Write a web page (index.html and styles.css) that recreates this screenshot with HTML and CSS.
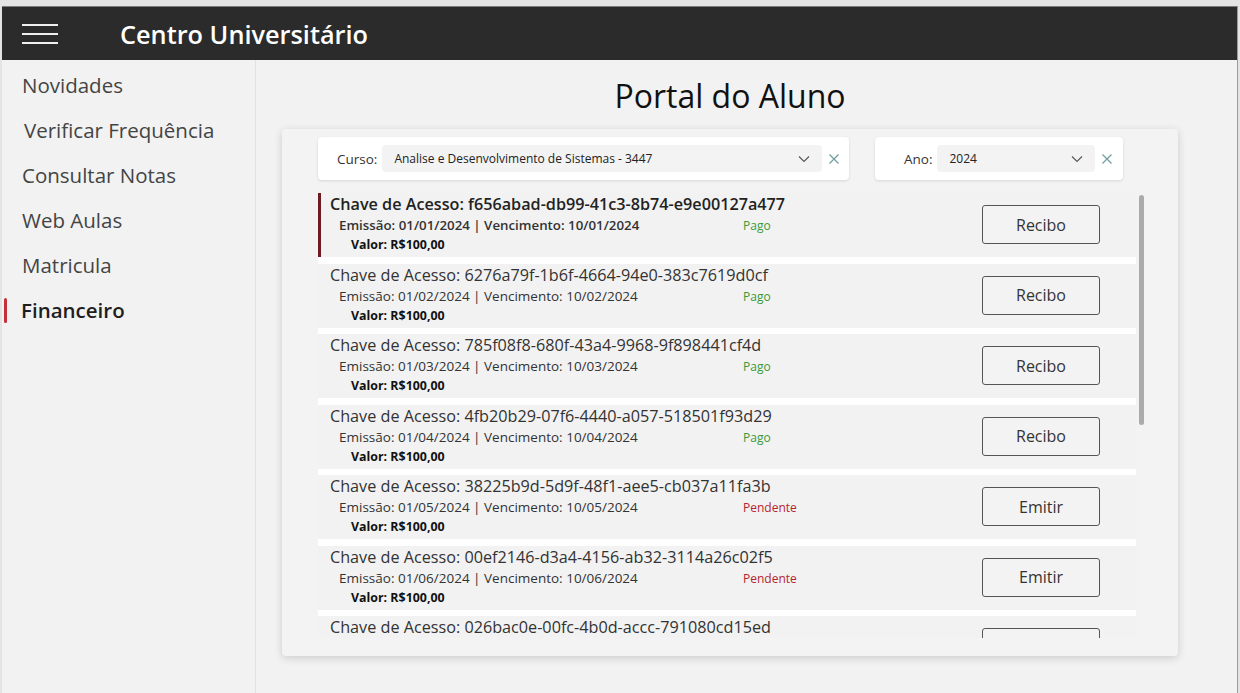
FILE: index.html
```html
<!DOCTYPE html>
<html lang="pt-BR">
<head>
<meta charset="utf-8">
<title>Centro Universitário - Portal do Aluno</title>
<link rel="stylesheet" href="styles.css">
</head>
<body>
<div class="window">
  <header class="topbar">
    <svg class="hamburger" width="36" height="22" viewBox="0 0 36 22">
      <rect x="0" y="1" width="36" height="2" fill="#f0f0f0"/>
      <rect x="0" y="10" width="36" height="2" fill="#f0f0f0"/>
      <rect x="0" y="19" width="36" height="2" fill="#f0f0f0"/>
    </svg>
    <h1 class="app-title">Centro Universitário</h1>
  </header>
  <div class="layout">
    <nav class="sidebar">
      <a class="nav-item">Novidades</a>
      <a class="nav-item nav-shift">Verificar Frequência</a>
      <a class="nav-item">Consultar Notas</a>
      <a class="nav-item">Web Aulas</a>
      <a class="nav-item">Matricula</a>
      <a class="nav-item active">Financeiro</a>
    </nav>
    <main class="main">
      <div class="content">
        <h2 class="page-title">Portal do Aluno</h2>
        <section class="card">
          <div class="filters">
            <div class="filter filter-curso">
              <span class="filter-label">Curso:</span>
              <div class="select">
                <span class="select-text">Analise e Desenvolvimento de Sistemas - 3447</span>
                <svg class="chevron" width="12" height="8" viewBox="0 0 12 8"><path d="M1 1.5 L6 6.5 L11 1.5" fill="none" stroke="#555" stroke-width="1.1"/></svg>
              </div>
              <svg class="clear" width="10" height="10" viewBox="0 0 10 10"><path d="M0.5 0.5 L9.5 9.5 M9.5 0.5 L0.5 9.5" stroke="#6f9c9c" stroke-width="1.2"/></svg>
            </div>
            <div class="filter filter-ano">
              <span class="filter-label">Ano:</span>
              <div class="select">
                <span class="select-text">2024</span>
                <svg class="chevron" width="12" height="8" viewBox="0 0 12 8"><path d="M1 1.5 L6 6.5 L11 1.5" fill="none" stroke="#555" stroke-width="1.1"/></svg>
              </div>
              <svg class="clear" width="10" height="10" viewBox="0 0 10 10"><path d="M0.5 0.5 L9.5 9.5 M9.5 0.5 L0.5 9.5" stroke="#6f9c9c" stroke-width="1.2"/></svg>
            </div>
          </div>
          <div class="list-area">
            <div class="list">
              <div class="item selected">
                <div class="info">
                  <div class="key">Chave de Acesso: f656abad-db99-41c3-8b74-e9e00127a477</div>
                  <div class="dates"><span class="date-text">Emissão: 01/01/2024 | Vencimento: 10/01/2024</span><span class="status pago">Pago</span></div>
                  <div class="valor">Valor: R$100,00</div>
                </div>
                <button class="btn">Recibo</button>
              </div>
              <div class="item">
                <div class="info">
                  <div class="key">Chave de Acesso: 6276a79f-1b6f-4664-94e0-383c7619d0cf</div>
                  <div class="dates"><span class="date-text">Emissão: 01/02/2024 | Vencimento: 10/02/2024</span><span class="status pago">Pago</span></div>
                  <div class="valor">Valor: R$100,00</div>
                </div>
                <button class="btn">Recibo</button>
              </div>
              <div class="item">
                <div class="info">
                  <div class="key">Chave de Acesso: 785f08f8-680f-43a4-9968-9f898441cf4d</div>
                  <div class="dates"><span class="date-text">Emissão: 01/03/2024 | Vencimento: 10/03/2024</span><span class="status pago">Pago</span></div>
                  <div class="valor">Valor: R$100,00</div>
                </div>
                <button class="btn">Recibo</button>
              </div>
              <div class="item">
                <div class="info">
                  <div class="key">Chave de Acesso: 4fb20b29-07f6-4440-a057-518501f93d29</div>
                  <div class="dates"><span class="date-text">Emissão: 01/04/2024 | Vencimento: 10/04/2024</span><span class="status pago">Pago</span></div>
                  <div class="valor">Valor: R$100,00</div>
                </div>
                <button class="btn">Recibo</button>
              </div>
              <div class="item">
                <div class="info">
                  <div class="key">Chave de Acesso: 38225b9d-5d9f-48f1-aee5-cb037a11fa3b</div>
                  <div class="dates"><span class="date-text">Emissão: 01/05/2024 | Vencimento: 10/05/2024</span><span class="status pendente">Pendente</span></div>
                  <div class="valor">Valor: R$100,00</div>
                </div>
                <button class="btn">Emitir</button>
              </div>
              <div class="item">
                <div class="info">
                  <div class="key">Chave de Acesso: 00ef2146-d3a4-4156-ab32-3114a26c02f5</div>
                  <div class="dates"><span class="date-text">Emissão: 01/06/2024 | Vencimento: 10/06/2024</span><span class="status pendente">Pendente</span></div>
                  <div class="valor">Valor: R$100,00</div>
                </div>
                <button class="btn">Emitir</button>
              </div>
              <div class="item">
                <div class="info">
                  <div class="key">Chave de Acesso: 026bac0e-00fc-4b0d-accc-791080cd15ed</div>
                  <div class="dates"><span class="date-text">Emissão: 01/07/2024 | Vencimento: 10/07/2024</span><span class="status pendente">Pendente</span></div>
                  <div class="valor">Valor: R$100,00</div>
                </div>
                <button class="btn">Emitir</button>
              </div>
            </div>
            <div class="scroll-track"><div class="scroll-thumb"></div></div>
          </div>
        </section>
      </div>
    </main>
  </div>
</div>
</body>
</html>
```

FILE: styles.css
```css
* { box-sizing: border-box; }
html, body { margin: 0; padding: 0; }
body {
  background: #e4e4e4;
  font-family: "Open Sans", "Noto Sans", sans-serif;
  color: #333;
  width: 1240px;
  height: 693px;
  overflow: hidden;
  padding: 6px 2px 0 2px;
}
.window {
  height: 687px;
  display: flex;
  flex-direction: column;
  border-top: 1px solid #7c7c7c;
  border-right: 1px solid #9a9a9a;
  background: #f2f2f2;
}
.topbar {
  height: 53px;
  background: #2b2b2b;
  display: flex;
  align-items: center;
  flex-shrink: 0;
}
.hamburger { margin-left: 20px; }
.app-title {
  margin: 0 0 0 62px;
  font-size: 25.3px;
  font-weight: 600;
  color: #fff;
  letter-spacing: 0;
}
.layout {
  flex: 1;
  display: flex;
  min-height: 0;
}
.sidebar {
  width: 254px;
  flex-shrink: 0;
  background: #f2f2f2;
  border-right: 1px solid #e2e2e2;
  box-shadow: 1px 0 2px rgba(0,0,0,0.04);
  padding-top: 3px;
  display: flex;
  flex-direction: column;
}
.nav-item {
  display: block;
  height: 45px;
  line-height: 45px;
  padding-left: 20px;
  font-size: 20.5px;
  color: #444;
  position: relative;
}
.nav-shift { padding-left: 22px; }
.nav-item.active {
  color: #1e1e1e;
  font-weight: 600;
  padding-left: 19px;
}
.nav-item.active::before {
  content: "";
  position: absolute;
  left: 2px;
  top: 10px;
  width: 3px;
  height: 25px;
  border-radius: 2px;
  background: #c4313a;
}
.main {
  flex: 1;
  background: #f2f2f2;
  padding-left: 26px;
}
.content {
  width: 896px;
  display: flex;
  flex-direction: column;
  align-items: center;
}
.page-title {
  margin: 15px 0 0 0;
  height: 54px;
  line-height: 42px;
  font-size: 32px;
  font-weight: 500;
  color: #111;
}
.card {
  width: 896px;
  height: 527px;
  background: #f3f3f3;
  border-radius: 4px;
  box-shadow: 0 2px 8px rgba(0,0,0,0.16);
  padding: 8px 0 0 36px;
  overflow: hidden;
}
.filters {
  display: flex;
  gap: 26px;
}
.filter {
  height: 43px;
  background: #fff;
  border-radius: 4px;
  box-shadow: 0 1px 3px rgba(0,0,0,0.12);
  display: flex;
  align-items: center;
}
.filter-curso { width: 531px; padding-left: 19px; }
.filter-ano { width: 248px; padding-left: 29px; }
.filter-label {
  font-size: 13.5px;
  color: #333;
  margin-right: 5px;
}
.select {
  height: 27px;
  background: #f3f3f3;
  border-radius: 4px;
  display: flex;
  align-items: center;
  padding: 0 12px 0 12px;
}
.filter-curso .select { width: 440px; }
.filter-ano .select { width: 158px; }
.select-text {
  flex: 1;
  font-size: 12px;
  color: #222;
}
.chevron { flex-shrink: 0; }
.clear { margin-left: 7px; }
.list-area {
  margin-top: 13px;
  display: flex;
  height: 445px;
}
.list {
  width: 818px;
  background: #fff;
  display: flex;
  flex-direction: column;
  gap: 6.5px;
  overflow: hidden;
}
.item {
  flex-shrink: 0;
  height: 64px;
  background: #f2f2f2;
  border-left: 3px solid transparent;
  display: flex;
  justify-content: space-between;
  align-items: flex-start;
  padding: 0 36px 0 9px;
}
.item.selected { border-left-color: #6b1c22; }
.info { padding-top: 0; }
.key {
  font-size: 16.2px;
  line-height: 22px;
  color: #333;
}
.item.selected .key { font-weight: 600; color: #222; }
.dates {
  display: flex;
  margin-top: 1px;
  padding-left: 9px;
  font-size: 13.5px;
  line-height: 19px;
}
.date-text { width: 404px; color: #333; }
.item.selected .date-text { font-weight: 600; font-size: 13.3px; }
.status { font-size: 12px; }
.pago { color: #3a9a3a; }
.pendente { color: #b3262e; }
.valor {
  padding-left: 21px;
  font-size: 12.4px;
  font-weight: 700;
  line-height: 19px;
  color: #111;
}
.btn {
  margin-top: 12px;
  width: 118px;
  height: 39px;
  background: #f3f3f3;
  border: 1px solid #555;
  border-radius: 3px;
  font-family: inherit;
  font-size: 16px;
  color: #333;
  padding: 0;
}
.scroll-track {
  width: 12px;
  position: relative;
}
.scroll-thumb {
  position: absolute;
  left: 3px;
  top: 2px;
  width: 5px;
  height: 230px;
  border-radius: 3px;
  background: #ababab;
}
```
